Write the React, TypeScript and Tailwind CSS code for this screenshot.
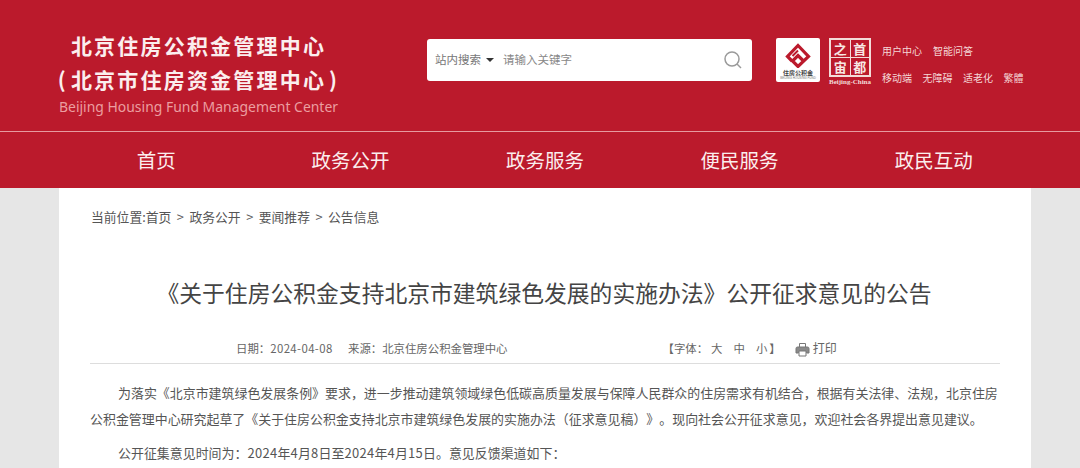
const cjk = "font-['Noto_Sans_CJK_SC','Noto_Sans',sans-serif]";

const navItems = ["首页", "政务公开", "政务服务", "便民服务", "政民互动"];
const crumbs = ["当前位置:首页", "政务公开", "要闻推荐", "公告信息"];

function FundLogo() {
  return (
    <div className="flex h-[44px] w-[44px] flex-col items-center rounded-[2px] bg-white pt-[4px]">
      <svg width="26" height="26" viewBox="0 0 26 26" fill="none" stroke="#bb1a2c" strokeWidth="3.2">
        <path d="M7 19 2.5 14.5 13 3.5l10.5 11L13 24.5 7.5 19 13 13.5l4.5 4.5" />
        <path d="M13 8.5 7.5 14" strokeWidth="2" />
      </svg>
      <span className="mt-[1px] text-[6px] leading-[7px] font-bold whitespace-nowrap text-[#444]">住房公积金</span>
      <span className="font-['Liberation_Sans',sans-serif] text-[3px] leading-[4px] whitespace-nowrap text-[#777]">BEIJING HOUSING FUND</span>
    </div>
  );
}

function CapitalLogo() {
  return (
    <div className="flex w-[42px] flex-col items-center">
      <div className="grid h-[39px] w-[42px] grid-cols-2 grid-rows-2 gap-[1px] border-[2px] border-[#f3dcd9] bg-[#f3dcd9] text-center text-[13px] leading-[17px] font-bold text-[#f7e8e4]">
        <span className="bg-[#bb1a2c]">之</span>
        <span className="bg-[#bb1a2c]">首</span>
        <span className="bg-[#bb1a2c]">宙</span>
        <span className="bg-[#bb1a2c]">都</span>
      </div>
      <span className="mt-[1px] font-['Liberation_Serif',serif] text-[7px] leading-[8px] font-bold whitespace-nowrap text-[#f3dcd9]">Beijing-China</span>
    </div>
  );
}

function SearchBox() {
  return (
    <div className="ml-[85px] flex h-[42px] w-[325px] items-center rounded-[3px] bg-white pr-[9px] pl-[8px] text-[11.5px] text-[#777]">
      <span>站内搜索</span>
      <span className="mr-[9px] ml-[5px] h-0 w-0 border-x-[4px] border-t-[4px] border-x-transparent border-t-[#333]" />
      <span className="text-[#888]">请输入关键字</span>
      <svg className="ml-auto" width="20" height="20" viewBox="0 0 20 20" fill="none" stroke="#9a9a9a" strokeWidth="1.5">
        <circle cx="9" cy="9" r="7" />
        <path d="M14 14l4 4" />
      </svg>
    </div>
  );
}

export default function App() {
  return (
    <div className={`h-[468px] w-[1080px] overflow-hidden bg-[#e6e6e6] ${cjk}`}>
      <header className="flex h-[131px] items-start bg-[#bb1a2c]">
        <div className="mt-[28px] ml-[55px] w-[287px] text-center">
          <div className="text-[21px] leading-[34px] font-bold tracking-[2.2px] text-[#fbeeee]">北京住房公积金管理中心</div>
          <div className="flex justify-center gap-[3px] text-[21px] leading-[34px] font-bold tracking-[2.2px] whitespace-nowrap text-[#fbeeee]">
            <span>(</span>
            <span>北京市住房资金管理中心</span>
            <span>)</span>
          </div>
          <div className="font-['Noto_Sans',sans-serif] text-[13.95px] leading-[21px] whitespace-nowrap text-[#eb9ea0]">Beijing Housing Fund Management Center</div>
        </div>
        <div className="mt-[39px]">
          <SearchBox />
        </div>
        <div className="mt-[38px] ml-[24px] flex gap-[9px]">
          <FundLogo />
          <CapitalLogo />
        </div>
        <div className="mt-[44px] ml-[11px] text-[10px] leading-[14px] text-[#f5d7d7]">
          <div className="flex gap-[11px]">
            <span>用户中心</span>
            <span>智能问答</span>
          </div>
          <div className="mt-[13px] flex gap-[10.5px]">
            <span>移动端</span>
            <span>无障碍</span>
            <span>适老化</span>
            <span>繁體</span>
          </div>
        </div>
      </header>
      <nav className="h-[57px] border-t border-[#e79aa0] bg-[#bb1a2c] pl-[59px]">
        <div className="grid h-full w-[972px] grid-cols-5 items-center text-center text-[19.5px] text-[#fbeeee]">
          {navItems.map((item) => (
            <span key={item}>{item}</span>
          ))}
        </div>
      </nav>
      <main className="ml-[59px] h-[281px] w-[972px] bg-white px-[31px] text-[#555]">
        <div className="flex gap-[5.5px] pt-[19px] pl-[1px] text-[12.8px] leading-[20px] text-[#555]">
          {crumbs.map((crumb, i) => (
            <span key={crumb} className="flex gap-[5.5px]">
              {i > 0 && <span>&gt;</span>}
              {crumb}
            </span>
          ))}
        </div>
        <h1 className="mt-[49px] pr-[2px] text-center text-[22.8px] leading-[34px] font-normal text-[#444]">《关于住房公积金支持北京市建筑绿色发展的实施办法》公开征求意见的公告</h1>
        <div className="mt-[29px] flex h-[25px] items-start border-b border-[#ddd] pl-[146px] text-[11.4px] leading-[18px] text-[#666]">
          <span className="w-[112px]">
            日期：<span className="tracking-[0.4px]">2024-04-08</span>
          </span>
          <span>来源：北京住房公积金管理中心</span>
          <span className="ml-[155px]">【字体：</span>
          <span className="ml-[3px] flex gap-[11px]">
            <span>大</span>
            <span>中</span>
            <span>小</span>
          </span>
          <span className="ml-[2px]">】</span>
          <svg className="mt-[3px] ml-[14px]" width="15" height="15" viewBox="0 0 15 15" fill="#8a8a8a" stroke="#777" strokeWidth="1">
            <path d="M4.5 5V1.5h6V5" fill="none" />
            <path d="M3.5 11H1V6.5A1.5 1.5 0 0 1 2.500 5h10A1.500 1.500 0 0 1 14 6.500V11h-2.500" />
            <path d="M4 9h7v5H4z" fill="#fff" />
          </svg>
          <span className="ml-[3px] text-[12px]">打印</span>
        </div>
        <p className="mt-[16px] indent-[28px] text-[12.95px] leading-[26px] text-[#555] [text-spacing-trim:space-all]">为落实《北京市建筑绿色发展条例》要求，进一步推动建筑领域绿色低碳高质量发展与保障人民群众的住房需求有机结合，根据有关法律、法规，北京住房公积金管理中心研究起草了《关于住房公积金支持北京市建筑绿色发展的实施办法（征求意见稿）》。现向社会公开征求意见，欢迎社会各界提出意见建议。</p>
        <p className="mt-[8px] indent-[28px] text-[12.95px] leading-[26px] text-[#555] [text-spacing-trim:space-all]">
          公开征集意见时间为：<span className="tracking-[0.35px]">2024</span>年<span className="tracking-[0.35px]">4</span>月<span className="tracking-[0.35px]">8</span>日至<span className="tracking-[0.35px]">2024</span>年<span className="tracking-[0.35px]">4</span>月<span className="tracking-[0.35px]">15</span>日。意见反馈渠道如下：
        </p>
      </main>
    </div>
  );
}
